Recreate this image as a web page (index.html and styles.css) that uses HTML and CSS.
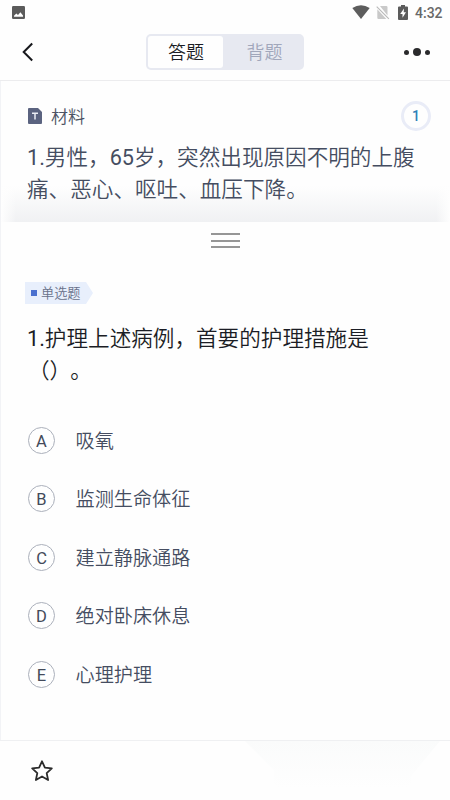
FILE: index.html
```html
<!DOCTYPE html>
<html lang="zh-CN">
<head>
<meta charset="utf-8">
<title>答题</title>
<link rel="stylesheet" href="styles.css">
</head>
<body>
<div class="screen">
  <div class="status">
    <svg class="photo" width="13" height="13" viewBox="0 0 13 13"><rect width="13" height="13" rx="1.2" fill="#5b5b5b"/><path d="M2 10.7V9.700L4.300 7.400 6 9 8.400 6.300 11 9.500v1.200z" fill="#fff"/></svg>
    <svg width="18" height="14" viewBox="0 0 18 14"><path d="M.3 3Q9-2.400 17.700 3L9 14z" fill="#5d5d5d"/></svg>
    <svg class="sim" width="14" height="15" viewBox="0 0 14 15"><path d="M4 1h6.200q1.300 0 1.300 1.300v8.200zM1.300 4.300l9 9.700H2.500q-1.200 0-1.200-1.200z" fill="#c9c9c9"/><path d="M.7 1.700l12.200 12.200" stroke="#b8b8b8" stroke-width="1.100"/></svg>
    <svg class="battery" width="10" height="15" viewBox="0 0 10 15"><path d="M3 0h4v1.500h2q1 0 1 1V14q0 1-1 1H1q-1 0-1-1V2.500q0-1 1-1h2z" fill="#5b5b5b"/><path d="M6 3.500L2.200 9H4.500v3.700L8 7.200H5.700z" fill="#fff"/></svg>
    <span class="time">4:32</span>
  </div>
  <header class="nav">
    <svg class="back" width="12" height="20" viewBox="0 0 12 20"><path d="M10.200 1.500L1.700 10l8.500 8.500" fill="none" stroke="#17181c" stroke-width="2"/></svg>
    <div class="tabs"><span class="tab active">答题</span><span class="tab">背题</span></div>
    <div class="more"><i></i><i class="big"></i><i></i></div>
  </header>
  <section class="material">
    <div class="material-head">
      <svg width="14" height="16" viewBox="0 0 14 16"><path d="M1 0h9l4 4v11q0 1-1 1H1q-1 0-1-1V1q0-1 1-1z" fill="#5b6380"/><path d="M4 5.300h6M7 5.300v6.200" stroke="#eceef5" stroke-width="1.500"/></svg>
      <span class="label">材料</span>
      <span class="count">1</span>
    </div>
    <p class="passage"><span class="num">1.</span>男性，<span class="num">65</span>岁，突然出现原因不明的上腹<br>痛、恶心、呕吐、血压下降。</p>
  </section>
  <main class="question">
    <div class="handle"><i></i><i></i><i></i></div>
    <div class="tag"><i></i><span>单选题</span></div>
    <p class="stem"><span class="num">1.</span>护理上述病例，首要的护理措施是<br><span class="blank">（）</span>。</p>
    <ul class="options">
      <li><b>A</b><span>吸氧</span></li>
      <li><b>B</b><span>监测生命体征</span></li>
      <li><b>C</b><span>建立静脉通路</span></li>
      <li><b>D</b><span>绝对卧床休息</span></li>
      <li><b>E</b><span>心理护理</span></li>
    </ul>
  </main>
  <footer class="bottom">
    <svg width="24" height="24" viewBox="0 0 24 24"><path d="M12 2.300l2.900 6.300 6.900.8-5.100 4.700 1.400 6.900-6.100-3.500L5.900 21l1.400-6.900-5.100-4.700 6.900-.8z" fill="none" stroke="#2b2b2b" stroke-width="1.800" stroke-linejoin="round"/></svg>
    <div class="haze"></div>
  </footer>
</div>
</body>
</html>
```
FILE: styles.css
```css
* { box-sizing: border-box; margin: 0; padding: 0; }
body {
  background: #fefefe;
  font-family: Roboto, "Noto Sans CJK SC DemiLight", "Noto Sans CJK SC", sans-serif;
  font-weight: 350;
  text-spacing-trim: space-all;
}
svg { display: block; flex: none; }
.screen { width: 450px; height: 800px; display: flex; flex-direction: column; overflow: hidden; }

.status { height: 24px; padding: 0 7px 0 12px; display: flex; align-items: center; }
.photo { margin-right: auto; }
.sim { margin-left: 6px; }
.battery { margin-left: 8px; }
.time { width: 28px; margin-left: 7px; font-size: 14px; line-height: 24px; font-weight: 500; color: #686868; padding-top: 1px; }

.nav { height: 57px; padding: 0 20px 0 22px; display: flex; align-items: center; justify-content: space-between; border-bottom: 1px solid #ececee; }
.tabs { width: 158px; height: 36px; margin-left: 12px; padding: 2px; display: flex; background: #e7e9f1; border-radius: 5px; }
.tab { flex: 1; font-size: 18px; line-height: 34px; text-align: center; color: #a1a7bb; padding-left: 4px; }
.tab.active { flex: none; width: 75px; padding-left: 1px; background: #fefefe; color: #1b1d24; border-radius: 3px; }
.more { display: flex; align-items: center; gap: 4px; }
.more i { width: 5px; height: 5px; border-radius: 50%; background: #2a2a2c; }
.more .big { width: 8px; height: 8px; }

.material { height: 141px; padding: 20px 19px 0 26px; border-left: 1px solid #f2f3f6; background: linear-gradient(to right, #fefefe, transparent 15px, transparent 435px, #fefefe), linear-gradient(to bottom, #fefefe 105px, #f0f1f3 141px); }
.material-head { height: 30px; display: flex; align-items: center; }
.material-head svg { margin-left: 1px; }
.label { margin-left: 9px; padding-top: 2px; font-size: 17px; line-height: 30px; color: #4d5365; }
.count { width: 30px; height: 30px; margin-left: auto; border: 3px solid #e9ecf7; border-radius: 50%; font-size: 14px; line-height: 25px; font-weight: 500; text-align: center; color: #2f80b8; }
.passage { padding-top: 11px; font-size: 21.6px; line-height: 32px; color: #454d61; white-space: nowrap; }
.num { font-weight: 400; }

.question { height: 518px; padding: 11px 24px 0; border-left: 1px solid #f2f3f6; background: #fefefe; }
.handle { width: 29px; height: 15px; margin: 0 auto; display: flex; flex-direction: column; justify-content: space-between; }
.handle i { height: 2px; background: #969696; }
.tag { width: 68px; height: 22px; margin-top: 34px; padding-left: 6px; display: flex; align-items: center; background: #e8effc; clip-path: polygon(0 0, 61px 0, 68px 50%, 61px 100%, 0 100%); }
.tag i { width: 6px; height: 6px; background: #4a70cf; }
.tag span { margin-left: 4px; padding-top: 2px; font-size: 13.2px; line-height: 22px; color: #68718a; }
.stem { margin-left: 2px; padding-top: 19px; font-size: 21.6px; line-height: 32px; color: #1b1d25; white-space: nowrap; }
.blank { margin: 0 -1px 0 1px; }
.options { padding: 24px 0 0 3px; list-style: none; }
.options li { height: 58.5px; display: flex; align-items: center; }
.options b { width: 27px; height: 27px; border: 1px solid #abb0bb; border-radius: 50%; font-size: 16.5px; line-height: 27px; font-weight: 400; text-align: center; color: #434a5a; }
.options span { margin-left: 20.5px; padding-top: 3px; font-size: 19.15px; line-height: 28px; color: #454d61; }

.bottom { height: 60px; padding-left: 30px; display: flex; align-items: center; border-top: 1px solid #eff0f2; }
.haze { width: 195px; height: 59px; margin-left: 191px; background: linear-gradient(to bottom, #fafbfb, #fefefe 80%); clip-path: polygon(0 0, 100% 0, 85% 60%, 85% 100%, 15% 100%, 15% 50%); }
```
